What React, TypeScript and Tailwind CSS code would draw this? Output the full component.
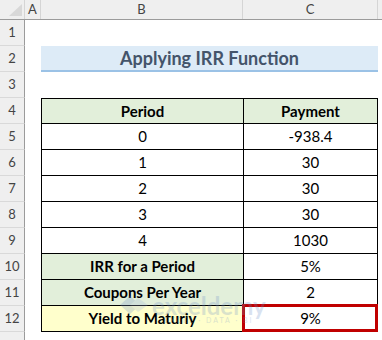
import React from 'react';

const rows: { b: string; c: string; kind: 'head' | 'plain' | 'label' | 'yield' }[] = [
  { b: 'Period', c: 'Payment', kind: 'head' },
  { b: '0', c: '-938.4', kind: 'plain' },
  { b: '1', c: '30', kind: 'plain' },
  { b: '2', c: '30', kind: 'plain' },
  { b: '3', c: '30', kind: 'plain' },
  { b: '4', c: '1030', kind: 'plain' },
  { b: 'IRR for a Period', c: '5%', kind: 'label' },
  { b: 'Coupons Per Year', c: '2', kind: 'label' },
  { b: 'Yield to Maturiy', c: '9%', kind: 'yield' },
];

const RowHead = ({ n }: { n?: number }) => (
  <div className="w-[25px] shrink-0 h-full flex items-center justify-center bg-[#efefef] border-r border-r-[#9b9b9b] border-b border-b-[#d9d9d9] text-[13px] text-[#444]">
    {n}
  </div>
);

export default function App() {
  return (
    <div className="w-[382px] h-[340px] overflow-hidden bg-white relative" style={{ fontFamily: 'Lato, "Open Sans", sans-serif' }}>
      {/* column headers */}
      <div className="flex h-[20px] bg-[#efefef] border-b border-[#9b9b9b] text-[13px] text-[#444]">
        <div className="w-[25px] shrink-0 relative border-r border-[#d5d5d5]">
          <svg className="absolute left-[9px] top-[4px]" width="13" height="12" viewBox="0 0 13 12">
            <polygon points="13,0 13,12 0,12" fill="#d8d8d8" />
          </svg>
        </div>
        <div className="w-[16px] shrink-0 flex items-center justify-center border-r border-[#d5d5d5]">A</div>
        <div className="w-[202px] shrink-0 flex items-center justify-center border-r border-[#d5d5d5]">B</div>
        <div className="w-[135px] shrink-0 flex items-center justify-center border-r border-[#d5d5d5]">C</div>
        <div className="flex-1" />
      </div>

      {/* row 1 */}
      <div className="flex h-[26px]">
        <RowHead n={1} />
        <div className="flex-1" />
      </div>

      {/* row 2 title */}
      <div className="flex h-[26px]">
        <RowHead n={2} />
        <div className="w-[16px] shrink-0" />
        <div className="w-[337px] shrink-0 bg-[#ddebf7] border-b-2 border-[#9bc2e6] flex items-center justify-center text-[18px] font-bold text-[#44546a]">
          Applying IRR Function
        </div>
      </div>

      {/* row 3 */}
      <div className="flex h-[26px]">
        <RowHead n={3} />
        <div className="flex-1" />
      </div>

      {rows.map((r, i) => {
        const bg =
          r.kind === 'head' || r.kind === 'label'
            ? 'bg-[#e2efda]'
            : r.kind === 'yield'
            ? 'bg-[#ffffcc]'
            : 'bg-white';
        const bold = r.kind === 'plain' ? '' : 'font-bold';
        return (
          <div key={i} className="flex h-[26px]">
            <RowHead n={i + 4} />
            <div className="w-[16px] shrink-0" />
            <div
              className={`w-[202px] shrink-0 flex items-center justify-center border-l border-b border-black text-[15px] text-black ${bg} ${bold} ${
                i === 0 ? 'border-t' : ''
              }`}
            >
              {r.b}
            </div>
            <div
              className={`w-[135px] shrink-0 relative flex items-center justify-center border-l border-r border-b border-black text-[15px] text-black ${
                r.kind === 'head' ? 'bg-[#e2efda] font-bold' : 'bg-white'
              } ${i === 0 ? 'border-t' : ''}`}
            >
              {r.c}
              {r.kind === 'yield' && (
                <div className="absolute left-[-2px] right-[-1px] top-[-2px] bottom-[-1px] border-[3px] border-[#c00000]" />
              )}
            </div>
          </div>
        );
      })}

      {/* row 13 (cut off) */}
      <div className="flex h-[26px]">
        <RowHead />
      </div>

      {/* watermark */}
      <div className="absolute left-[120px] top-[296px] flex items-start gap-[4px] opacity-25 pointer-events-none">
        <svg width="28" height="18" viewBox="0 0 28 18">
          <polygon points="0,9 10,0 20,9 10,18" fill="#6d8fc7" />
          <polygon points="10,9 18,2 28,9 18,16" fill="#9fb5dd" />
        </svg>
        <div className="flex flex-col items-center leading-none">
          <span className="text-[24px] font-bold text-[#6d8fc7] leading-[20px]">exceldemy</span>
          <span className="text-[7px] tracking-[2px] text-[#6d8fc7] mt-[1px]">EXCEL · DATA · BI</span>
        </div>
      </div>
    </div>
  );
}
